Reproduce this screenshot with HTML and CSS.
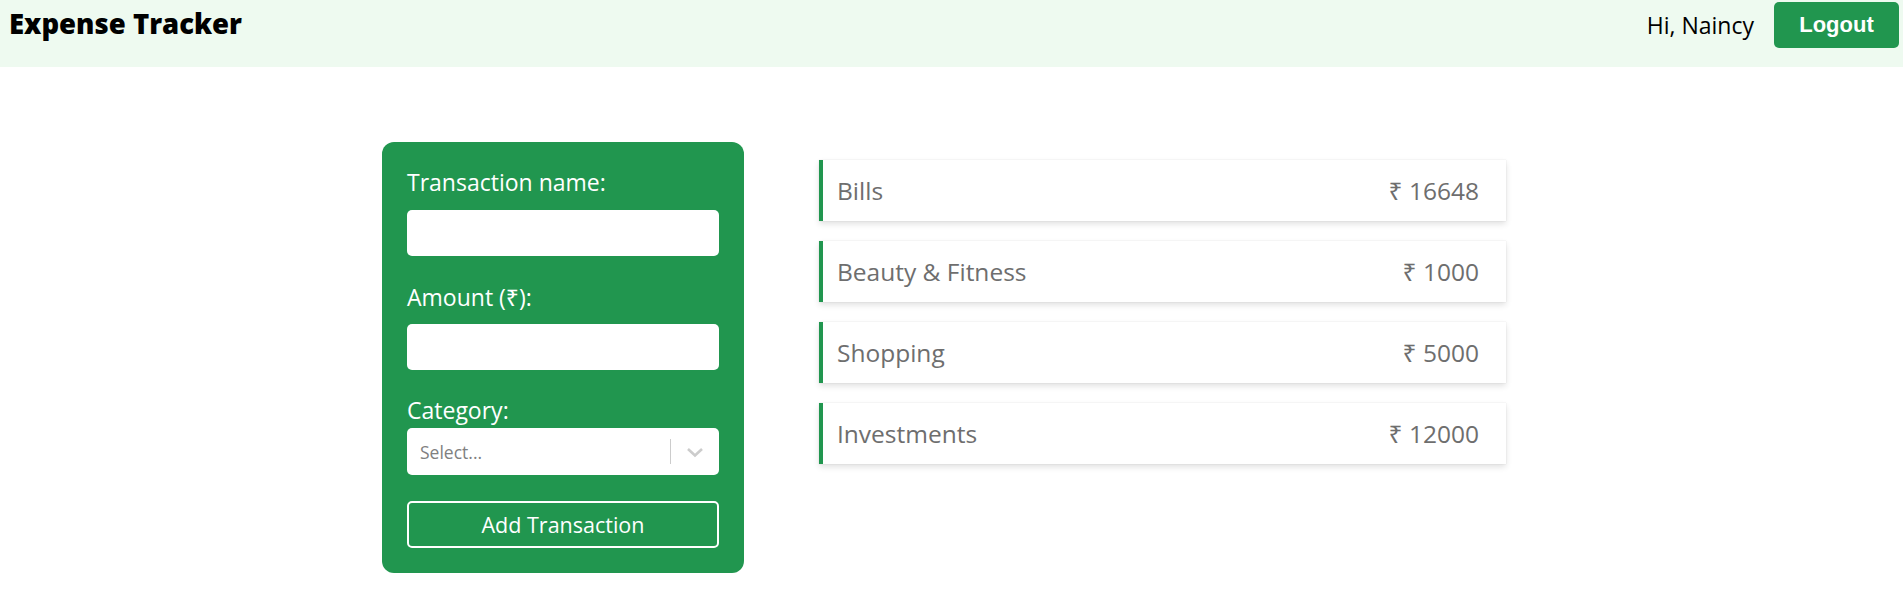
FILE: index.html
```html
<!DOCTYPE html>
<html lang="en">
<head>
<meta charset="utf-8">
<title>Expense Tracker</title>
<link rel="stylesheet" href="styles.css">
</head>
<body>
<header class="topbar">
  <h1 class="brand">Expense Tracker</h1>
  <div class="user">
    <span class="greet">Hi, Naincy</span>
    <button class="logout">Logout</button>
  </div>
</header>
<main class="content">
  <form class="card">
    <label class="label">Transaction name:</label>
    <input class="field" type="text">
    <label class="label l2">Amount (₹):</label>
    <input class="field" type="text">
    <label class="label l3">Category:</label>
    <div class="select">
      <span class="placeholder">Select...</span>
      <span class="sep"></span>
      <svg class="chev" width="20" height="20" viewBox="0 0 20 20"><path d="M3 7 L10 13.5 L17 7" fill="none" stroke="#cccccc" stroke-width="2.6"/></svg>
    </div>
    <button class="add" type="button">Add Transaction</button>
  </form>
  <ul class="list">
    <li class="item"><span>Bills</span><span>₹ 16648</span></li>
    <li class="item"><span>Beauty &amp; Fitness</span><span>₹ 1000</span></li>
    <li class="item"><span>Shopping</span><span>₹ 5000</span></li>
    <li class="item"><span>Investments</span><span>₹ 12000</span></li>
  </ul>
</main>
</body>
</html>
```
FILE: styles.css
```css
* { box-sizing: border-box; }
body {
  margin: 0;
  font-family: "Open Sans", "Noto Sans", sans-serif;
  background: #ffffff;
}
.topbar {
  height: 67px;
  background: #eefaf0;
  display: flex;
  justify-content: space-between;
  align-items: flex-start;
  padding: 2px 4px 0 9px;
}
.brand {
  margin: 3px 0 0 0;
  font-size: 27.5px;
  line-height: 37px;
  font-weight: 800;
  color: #000;
}
.user {
  display: flex;
  align-items: center;
  gap: 20px;
}
.greet {
  font-size: 23px;
  color: #000;
}
.logout {
  width: 125px;
  height: 46px;
  background: #21964f;
  color: #fff;
  border: none;
  border-radius: 5px;
  font-family: "Liberation Sans", Arial, sans-serif;
  font-weight: bold;
  font-size: 22px;
}
.content {
  display: flex;
  align-items: flex-start;
  gap: 75px;
  padding: 75px 0 0 382px;
}
.card {
  width: 362px;
  height: 431px;
  background: #21964f;
  border-radius: 12px;
  padding: 25px 25px 25px 25px;
  display: flex;
  flex-direction: column;
  margin: 0;
  flex-shrink: 0;
}
.label {
  color: #fff;
  font-size: 23px;
  line-height: 31px;
  margin-bottom: 12px;
}
.label.l2 { margin-top: 26px; margin-bottom: 11px; }
.label.l3 { margin-top: 25px; margin-bottom: 2px; }
.field {
  height: 46px;
  border: none;
  border-radius: 5px;
  background: #fff;
  width: 100%;
}
.select {
  height: 47px;
  background: #fff;
  border-radius: 5px;
  display: flex;
  align-items: center;
  padding: 0 14px 0 13px;
}
.placeholder {
  flex: 1;
  font-size: 17.5px;
  color: #808080;
}
.sep {
  width: 1px;
  height: 25px;
  background: #cccccc;
  margin-right: 14px;
}
.chev { display: block; }
.add {
  margin-top: 26px;
  height: 47px;
  background: transparent;
  border: 2px solid #fff;
  border-radius: 5px;
  color: #fff;
  font-family: "Open Sans", "Noto Sans", sans-serif;
  font-size: 21.5px;
}
.list {
  list-style: none;
  margin: 18px 0 0 0;
  padding: 0;
  width: 687px;
  flex-shrink: 0;
  display: flex;
  flex-direction: column;
  gap: 20px;
}
.item {
  height: 61px;
  display: flex;
  justify-content: space-between;
  align-items: center;
  padding: 0 27px 0 14px;
  border-left: 4px solid #21964f;
  background: #fff;
  box-shadow: 0 3px 6px rgba(0,0,0,0.12), 0 0 1px rgba(0,0,0,0.15);
  font-size: 24.5px;
  color: #6e6e6e;
}
```
